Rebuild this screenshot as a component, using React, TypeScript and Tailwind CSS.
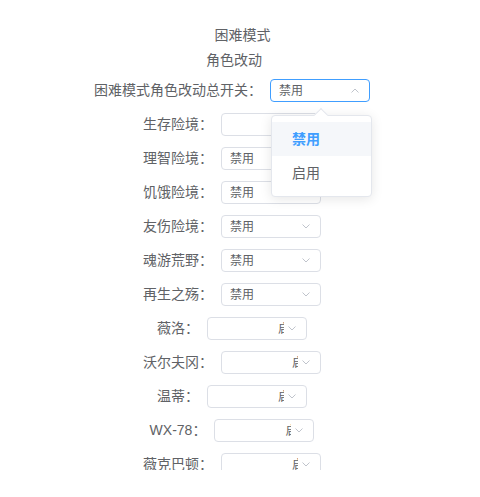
import React from "react";

type Row = { label: string; value?: string; clipped?: boolean };

const rows: Row[] = [
  { label: "生存险境：", value: "" },
  { label: "理智险境：", value: "禁用" },
  { label: "饥饿险境：", value: "禁用" },
  { label: "友伤险境：", value: "禁用" },
  { label: "魂游荒野：", value: "禁用" },
  { label: "再生之殇：", value: "禁用" },
  { label: "薇洛：", clipped: true },
  { label: "沃尔夫冈：", clipped: true },
  { label: "温蒂：", clipped: true },
  { label: "WX-78：", clipped: true },
  { label: "薇克巴顿：", clipped: true },
];

const Chevron = ({ up = false }: { up?: boolean }) => (
  <svg width="8" height="5" viewBox="0 0 8 5" className="shrink-0">
    <path
      d={up ? "M0.5 4.5 L4 1 L7.5 4.5" : "M0.5 0.5 L4 4 L7.5 0.5"}
      fill="none"
      stroke="#c0c4cc"
      strokeWidth="1"
    />
  </svg>
);

const SelectBox = ({ row }: { row: Row }) => (
  <div className="ml-2 flex h-[23px] w-[100px] items-center rounded border border-[#dcdfe6] bg-white pr-[10px] text-[12px] text-[#606266]">
    {row.clipped ? (
      <>
        <div className="w-[76px] shrink-0 overflow-hidden whitespace-nowrap pl-[70px]">启用</div>
        <div className="flex-1" />
      </>
    ) : (
      <div className="flex-1 pl-2">{row.value}</div>
    )}
    <Chevron />
  </div>
);

export default function App() {
  return (
    <div
      className="h-[470px] overflow-hidden bg-white text-[14px] text-[#606266]"
      style={{ fontFamily: '"Liberation Sans", "Noto Sans CJK SC", sans-serif' }}
    >
      <div className="flex flex-col items-center pt-[23px]">
        <div className="pl-[5px] leading-[25px]">困难模式</div>
        <div className="pr-[12px] leading-[25px]">角色改动</div>
        <div className="mt-[6px] flex flex-col items-center gap-[11px] pr-[16px]">
          <div className="flex items-center">
            <span>困难模式角色改动总开关：</span>
            <div className="relative ml-2 flex h-[23px] w-[100px] items-center rounded border border-[#409eff] bg-white pr-[10px] text-[12px] text-[#606266]">
              <div className="flex-1 pl-2">禁用</div>
              <Chevron up />
              <div className="absolute left-[0px] top-[35px] z-10 w-[101px] rounded border border-[#e4e7ed] bg-white py-[6px] text-[14px] shadow-[0_2px_12px_0_rgba(0,0,0,0.1)]">
                <div className="absolute -top-[6px] left-[44px] h-[10px] w-[10px] rotate-45 border-l border-t border-[#e4e7ed] bg-white" />
                <div className="relative flex h-[34px] items-center bg-[#f5f7fa] pl-[20px] font-bold text-[#409eff]">
                  禁用
                </div>
                <div className="flex h-[34px] items-center pl-[20px] text-[#606266]">启用</div>
              </div>
            </div>
          </div>
          {rows.map((row) => (
            <div key={row.label} className="flex items-center">
              <span>{row.label}</span>
              <SelectBox row={row} />
            </div>
          ))}
        </div>
      </div>
    </div>
  );
}
